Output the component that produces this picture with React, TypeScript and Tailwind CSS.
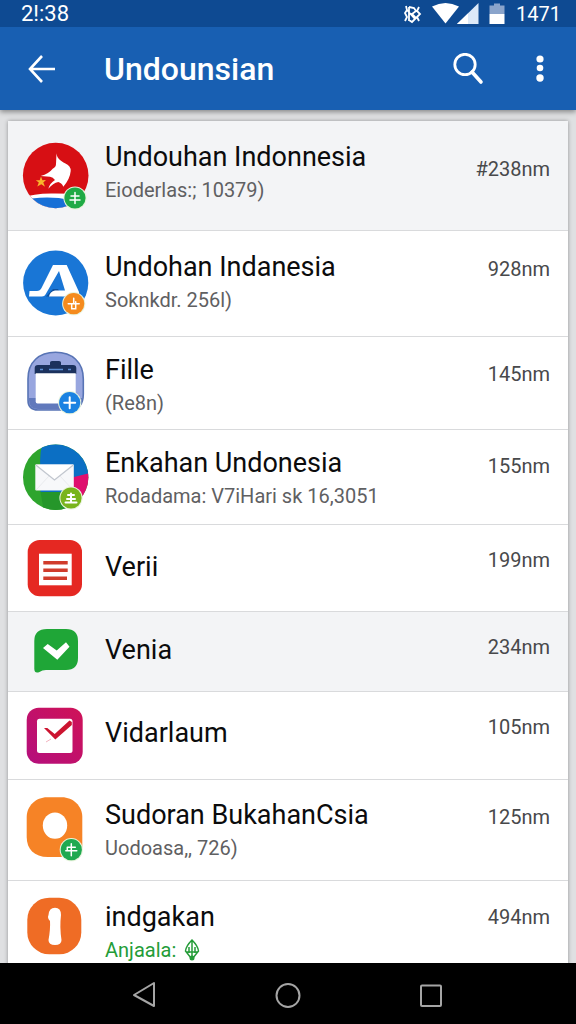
import type { ReactNode } from "react";

type Item = {
  title: string;
  detail?: string;
  size: string;
  icon: ReactNode;
  highlighted?: boolean;
  online?: boolean;
  textClass: string;
  sizeClass: string;
};

function IconFrame({ children }: { children: ReactNode }) {
  return (
    <svg
      viewBox="0 0 68 70"
      className="h-[70px] w-[68px] shrink-0"
      aria-hidden="true"
    >
      {children}
    </svg>
  );
}

function Badge({
  x,
  y,
  fill,
  children,
}: {
  x: number;
  y: number;
  fill: string;
  children: ReactNode;
}) {
  return (
    <g transform={`translate(${x} ${y})`}>
      <circle r="11.6" fill="#e8f3dc" />
      <circle r="10.6" fill={fill} />
      <g fill="none" stroke="#fff" strokeWidth="1.5" strokeLinecap="round">
        {children}
      </g>
    </g>
  );
}

function BirdIcon() {
  return (
    <IconFrame>
      <clipPath id="bird-clip">
        <circle cx="33.7" cy="34.5" r="32.8" />
      </clipPath>
      <g clipPath="url(#bird-clip)">
        <rect width="68" height="70" fill="#d70f14" />
        <path d="M0 57Q12 52 33 52.5L68 53V70H0Z" fill="#fff" />
        <path d="M10 57.5Q30 55 48 59L56 70H14Z" fill="#176fd6" />
      </g>
      <path
        d="M34.5 12.3C35 18 39 20 43 22.3Q49 25 48.7 30Q48 38 41.3 45.7Q40 42 36.3 41Q31 42 26.3 47.7Q28 42 33 39Q31 36 28 35.7L18.7 35Q27 32.5 30.7 27.7Q34 26 34 23Z"
        fill="#fff"
      />
      <path
        d="M19 35.5L20.4 39.3L24 39L21.3 41.5L23 45.7L19.3 43.3L15.3 45.5L16.8 41.5L13.8 39.3L17.7 39.3Z"
        fill="#f9b52c"
      />
      <Badge x={53} y={57} fill="#1faa45">
        <path d="M-4 -2H4M-5 2H5M0 -5.5V5.5" />
      </Badge>
    </IconFrame>
  );
}

function RoadIcon() {
  return (
    <IconFrame>
      <circle cx="33.7" cy="34" r="32.6" fill="#1976d6" />
      <path d="M24 47.6L31 40H36L40 47.6Z" fill="#0d4f9d" />
      <path
        d="M31 16H44.7L57 43V47.6H27Q28 42.5 33 41.5H43L37 22L23.5 45.5Q22.5 47.6 20 47.6H7L7.5 42H15Q18 42 19.5 39Z"
        fill="#fff"
      />
      <Badge x={51.7} y={54.7} fill="#f58b1e">
        <path d="M0 -5.5V-1M-5.5 0H5.5M-2 0V5H2V-2" />
      </Badge>
    </IconFrame>
  );
}

function CalendarIcon() {
  return (
    <IconFrame>
      <path
        d="M33.5 4.3C50 4.3 61.3 14 61.3 31V46Q61.3 62 47 62H16Q6 62 6 52V31C6 14 17 4.3 33.5 4.3Z"
        fill="#98a6df"
        stroke="#5874b5"
        strokeWidth="1.6"
      />
      <path d="M7 50H60Q58 61 47 61H16Q7 61 7 52Z" fill="#6179bc" />
      <path
        d="M12.7 26V20Q12.7 17 16 17H28V14.5Q28 13 30 13H37Q39 13 39 14.5V17H51Q54.3 17 54.3 20V26Z"
        fill="#1b315d"
      />
      <path
        d="M18 21.5H21M27 21.5H41M46 21.5H49"
        stroke="#5c8ed4"
        strokeWidth="1.6"
      />
      <path d="M13.7 25.3H53.7V55.5H15.5Q13.7 55.5 13.7 53.5Z" fill="#fff" />
      <Badge x={47.7} y={54.7} fill="#1a82e2">
        <path d="M-5.5 0H5.5M0 -5.5V5.5" strokeWidth="2" />
      </Badge>
    </IconFrame>
  );
}

function MailIcon() {
  return (
    <IconFrame>
      <clipPath id="mail-clip">
        <circle cx="33.7" cy="35.2" r="32.7" />
      </clipPath>
      <g clipPath="url(#mail-clip)">
        <rect width="68" height="70" fill="#2ea52d" />
        <path d="M21 0Q17 12 18.5 26V50H50L68 32V0Z" fill="#0b6fc4" />
        <path d="M50 35.5L68 31V58H50Z" fill="#df0f6e" />
        <path d="M18.5 50H52V70H22Z" fill="#25962a" />
      </g>
      <rect x="13.3" y="22.3" width="38.5" height="26.2" rx="1" fill="#f7f8fa" />
      <path
        d="M13.8 23L32.5 38L51.3 23"
        fill="#fff"
        stroke="#c2c7cf"
        strokeWidth="1.3"
      />
      <path d="M14 48L27 34M51 48L38 34" stroke="#e4e6ea" strokeWidth=".8" />
      <Badge x={49} y={56} fill="#79b41c">
        <path d="M-5.5 4.5H5.5M-4 1H4M-3 -3H3M0 -4.5V4" strokeWidth="2" />
      </Badge>
    </IconFrame>
  );
}

function DocumentIcon() {
  return (
    <IconFrame>
      <rect x="5.7" y="7" width="54.3" height="56.3" rx="12" fill="#e52822" />
      <rect x="17" y="20.7" width="32.7" height="31.6" fill="#fff" />
      <path
        d="M21.3 29.7H45.7M21.3 37.3H45.7M21.3 45.3H45"
        stroke="#d03c2c"
        strokeWidth="3.6"
      />
    </IconFrame>
  );
}

function ChatIcon() {
  return (
    <IconFrame>
      <path
        d="M25 12H44Q56 12 56 24V41Q56 53 44 53H24Q20 53 17.5 55Q12.5 57 12.3 52V24Q12.3 12 25 12Z"
        fill="#1fa637"
      />
      <path
        d="M21 31L25.7 27L34.7 33.5L44 25.3L47.5 29.7L35.3 42.7Z"
        fill="#fff"
      />
    </IconFrame>
  );
}

function TaskIcon() {
  return (
    <IconFrame>
      <linearGradient id="task-fill" x1="0" y1="1" x2="1" y2="0">
        <stop offset="0" stopColor="#b40f7d" />
        <stop offset="1" stopColor="#cf1257" />
      </linearGradient>
      <rect x="4.7" y="6.7" width="56" height="56" rx="12" fill="url(#task-fill)" />
      <rect x="15" y="17.7" width="35.5" height="34.2" rx="2.5" fill="#fff" />
      <path
        d="M22 27L25.3 27L32.7 33L47.5 19.5L49.8 21V24L33.3 38.5Z"
        fill="#cc1430"
      />
      <path d="M24 41L29 38" stroke="#f3b4c0" strokeWidth="1" />
    </IconFrame>
  );
}

function RingIcon() {
  return (
    <IconFrame>
      <path
        d="M25 2.3H40C51 2.3 60.3 11 60.3 22V50Q60.3 62 50 62H26C12 62 4.7 54 4.7 42V22C4.7 11 14 2.3 25 2.3Z"
        fill="#f68326"
      />
      <ellipse cx="33" cy="30.6" rx="12.2" ry="13.2" fill="#fff" />
      <Badge x={49.3} y={54.7} fill="#1fa950">
        <path d="M-4 -2.5H4M-5.5 1H5.5M-4 -2.5V1M0 -6V6" />
      </Badge>
    </IconFrame>
  );
}

function PillIcon() {
  return (
    <IconFrame>
      <rect x="5.3" y="6.7" width="54" height="56.6" rx="22" fill="#ef6c25" />
      <path
        d="M33 16.7Q39 16.7 39 24Q37.5 36 39.5 49Q39.5 54 33 54Q26.5 54 26.5 49Q28.5 38 28 30Q25 27 26.5 24Q27 16.7 33 16.7Z"
        fill="#fff"
      />
    </IconFrame>
  );
}

function LeafIcon() {
  return (
    <svg viewBox="0 0 16 24" className="h-6 w-4" aria-hidden="true">
      <path
        d="M8 2Q14 8 14.5 13L9 20H7L1.5 13Q2 8 8 2ZM8 3V20M5 9V15M11 9V15M2 14H14"
        fill="none"
        stroke="#249c38"
        strokeWidth="1.5"
      />
      <circle cx="8" cy="20" r="2.5" fill="#249c38" />
    </svg>
  );
}

const items: Item[] = [
  {
    title: "Undouhan Indonnesia",
    detail: "Eioderlas:; 10379)",
    size: "#238nm",
    icon: <BirdIcon />,
    highlighted: true,
    textClass: "pt-5 pb-[23px]",
    sizeClass: "pt-8",
  },
  {
    title: "Undohan Indanesia",
    detail: "Soknkdr. 256l)",
    size: "928nm",
    icon: <RoadIcon />,
    textClass: "pt-5 pb-[19px]",
    sizeClass: "pt-[22px]",
  },
  {
    title: "Fille",
    detail: "(Re8n)",
    size: "145nm",
    icon: <CalendarIcon />,
    textClass: "pt-[17px] pb-[9px]",
    sizeClass: "pt-[21px]",
  },
  {
    title: "Enkahan Undonesia",
    detail: "Rodadama: V7iHari sk 16,3051",
    size: "155nm",
    icon: <MailIcon />,
    textClass: "pt-[17px] pb-[11px]",
    sizeClass: "pt-5",
  },
  {
    title: "Verii",
    size: "199nm",
    icon: <DocumentIcon />,
    textClass: "pt-[26px] pb-7",
    sizeClass: "pt-[19px]",
  },
  {
    title: "Venia",
    size: "234nm",
    icon: <ChatIcon />,
    highlighted: true,
    textClass: "pt-[22px] pb-[25px]",
    sizeClass: "pt-[19px]",
  },
  {
    title: "Vidarlaum",
    size: "105nm",
    icon: <TaskIcon />,
    textClass: "pt-[25px] pb-[30px]",
    sizeClass: "pt-[19px]",
  },
  {
    title: "Sudoran BukahanCsia",
    detail: "Uodoasa,, 726)",
    size: "125nm",
    icon: <RingIcon />,
    textClass: "pt-[19px] pb-[15px]",
    sizeClass: "pt-[21px]",
  },
  {
    title: "indgakan",
    detail: "Anjaala:",
    size: "494nm",
    icon: <PillIcon />,
    online: true,
    textClass: "pt-5 pb-1",
    sizeClass: "pt-5",
  },
];

function StatusBar() {
  return (
    <div className="flex h-[27px] items-center justify-between bg-[#0e4a92] pr-[15px] pl-[21px] text-white">
      <span className="text-[22px] leading-6">2!:38</span>
      <div className="flex items-center">
        <svg viewBox="0 0 104 24" className="mr-[10px] h-6 w-[104px]" aria-hidden="true">
          <g fill="none" stroke="#fff" strokeWidth="1.8">
            <path d="M4 4L5 8L3 11L5 15L3 19M17 5L15 9L18 12L15 15L17 19M7 5V19M7 5L12 6L14 9L10 12L14 16L10 20L7 18M5 8L13 17" />
          </g>
          <path d="M30 4.5Q43.5 -2.5 57 4.5L43.5 21.5Z" fill="#fff" />
          <path d="M55 22L76.5 1V22Z" fill="#dce9f8" />
          <path d="M55 22L66 11.5V22Z" fill="#fff" />
          <path d="M87.5 3.5H92V1.5H98V3.5H102.5V12H87.5Z" fill="#8aa4cb" />
          <rect x="87.5" y="12" width="15" height="10" fill="#fff" />
        </svg>
        <span className="text-xl leading-6">1471</span>
      </div>
    </div>
  );
}

function AppBar() {
  return (
    <header className="flex h-[83px] items-center bg-[#185fb2] pr-3 pl-[18px] text-white">
      <button type="button" aria-label="Back" className="flex size-12 items-center justify-center">
        <svg viewBox="0 0 28 28" className="size-7" fill="none" stroke="#fff" strokeWidth="2.6">
          <path d="M14 1L2 14L14 27M2 14H27" />
        </svg>
      </button>
      <h1 className="ml-[38px] flex-1 text-[32px] leading-10 font-medium">Undounsian</h1>
      <button type="button" aria-label="Search" className="flex size-12 items-center justify-center">
        <svg viewBox="0 0 32 32" className="size-8" fill="none" stroke="#fff">
          <circle cx="13" cy="11.5" r="10.2" strokeWidth="2.8" />
          <path d="M20 19L29 29" strokeWidth="3.6" strokeLinecap="round" />
        </svg>
      </button>
      <button type="button" aria-label="More options" className="ml-6 flex size-12 items-center justify-center">
        <svg viewBox="0 0 8 28" className="h-7 w-2" fill="#fff">
          <circle cx="4" cy="4" r="3.6" />
          <circle cx="4" cy="13" r="3.3" />
          <circle cx="4" cy="23" r="3.7" />
        </svg>
      </button>
    </header>
  );
}

function ItemRow({ item }: { item: Item }) {
  return (
    <li
      className={`border-b border-[#d9dadc] last:border-b-0 ${
        item.highlighted ? "bg-[#f3f4f6]" : "bg-white"
      }`}
    >
      <a href="#" className="flex items-center gap-[15px] pr-[18px] pl-[14px]">
        {item.icon}
        <div className={`min-w-0 flex-1 whitespace-nowrap ${item.textClass}`}>
          <p className="text-[27px] leading-8 text-[#0b0b0c]">{item.title}</p>
          {item.detail ? (
            <p
              className={`flex items-center gap-2 text-xl leading-[34px] ${
                item.online ? "text-[#249c38]" : "text-[#5f6062]"
              }`}
            >
              {item.detail}
              {item.online ? <LeafIcon /> : null}
            </p>
          ) : null}
        </div>
        <span className={`self-start text-xl leading-8 text-[#48494b] ${item.sizeClass}`}>
          {item.size}
        </span>
      </a>
    </li>
  );
}

function NavBar() {
  return (
    <nav className="grid h-[61px] shrink-0 grid-cols-3 bg-black px-18">
      <button type="button" aria-label="Back" className="flex items-center justify-center">
        <svg viewBox="0 0 28 28" className="size-7" fill="none" stroke="#a5a5a5" strokeWidth="2">
          <path d="M24 3V26L4 15Z" strokeLinejoin="round" />
        </svg>
      </button>
      <button type="button" aria-label="Home" className="flex items-center justify-center">
        <svg viewBox="0 0 28 28" className="size-7" fill="none" stroke="#a5a5a5" strokeWidth="2">
          <circle cx="14" cy="15.5" r="11.5" />
        </svg>
      </button>
      <button type="button" aria-label="Recent apps" className="flex items-center justify-center">
        <svg viewBox="0 0 28 28" className="size-7" fill="none" stroke="#a5a5a5" strokeWidth="2">
          <rect x="3" y="5.5" width="20" height="20.5" rx="1" />
        </svg>
      </button>
    </nav>
  );
}

export default function App() {
  return (
    <div className="flex h-screen flex-col overflow-hidden bg-[#dfe0e2] font-[Roboto,sans-serif]">
      <div className="z-10 shrink-0 shadow-[0_2px_5px_rgba(0,0,0,0.4)]">
        <StatusBar />
        <AppBar />
      </div>
      <main className="min-h-0 flex-1 overflow-hidden px-2">
        <ul className="mt-[11px] shadow-[0_0_4px_rgba(0,0,0,0.35)]">
          {items.map((item) => (
            <ItemRow key={item.title} item={item} />
          ))}
        </ul>
      </main>
      <NavBar />
    </div>
  );
}
